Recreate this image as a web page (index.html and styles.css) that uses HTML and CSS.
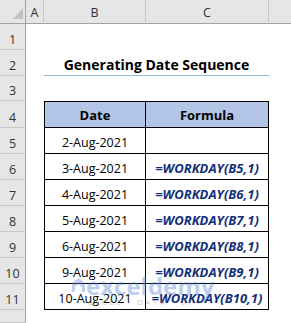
FILE: index.html
```html
<!DOCTYPE html>
<html>
<head>
<meta charset="utf-8">
<link rel="stylesheet" href="styles.css">
</head>
<body>
<div class="sheet">
  <div class="corner"><svg class="corner-tri" width="10" height="11" viewBox="0 0 10 11"><polygon points="10,0 10,11 0,11" fill="#c2c2c2"/></svg></div>
  <div class="colhead">A</div>
  <div class="colhead">B</div>
  <div class="colhead">C</div>
  <div class="colhead last"></div>

  <div class="rowhead">1</div><div class="cell"></div><div class="cell"></div><div class="cell"></div><div class="cell"></div>
  <div class="rowhead">2</div><div class="cell"></div><div class="cell title">Generating Date Sequence</div><div class="cell"></div>
  <div class="rowhead">3</div><div class="cell"></div><div class="cell"></div><div class="cell"></div><div class="cell"></div>

  <div class="rowhead">4</div><div class="cell"></div><div class="td th first">Date</div><div class="td th">Formula</div><div class="cell"></div>
  <div class="rowhead">5</div><div class="cell"></div><div class="td first">2-Aug-2021</div><div class="td formula"></div><div class="cell"></div>
  <div class="rowhead">6</div><div class="cell"></div><div class="td first">3-Aug-2021</div><div class="td formula">=WORKDAY(B5,1)</div><div class="cell"></div>
  <div class="rowhead">7</div><div class="cell"></div><div class="td first">4-Aug-2021</div><div class="td formula">=WORKDAY(B6,1)</div><div class="cell"></div>
  <div class="rowhead">8</div><div class="cell"></div><div class="td first">5-Aug-2021</div><div class="td formula">=WORKDAY(B7,1)</div><div class="cell"></div>
  <div class="rowhead">9</div><div class="cell"></div><div class="td first">6-Aug-2021</div><div class="td formula">=WORKDAY(B8,1)</div><div class="cell"></div>
  <div class="rowhead">10</div><div class="cell"></div><div class="td first">9-Aug-2021</div><div class="td formula">=WORKDAY(B9,1)</div><div class="cell"></div>
  <div class="rowhead">11</div><div class="cell"></div><div class="td first">10-Aug-2021</div><div class="td formula">=WORKDAY(B10,1)</div><div class="cell"></div>
  <div class="rowhead"></div>

  <div class="watermark">
    <svg class="wm-icon" width="13" height="14" viewBox="0 0 13 14"><polygon points="6.5,0 13,5 13,14 0,14 0,5" fill="#5b86d6"/><polygon points="6.5,6 10,9 10,14 3,14 3,9" fill="#ffffff"/></svg>
    <div class="wm-text">
      <span class="wm-name">exceldemy</span>
      <span class="wm-tag">EXCEL · DATA · BI</span>
    </div>
  </div>
</div>
</body>
</html>
```
FILE: styles.css
```css
* {
  box-sizing: border-box;
}

html, body {
  margin: 0;
  padding: 0;
  background: #ffffff;
}

body {
  font-family: "Open Sans", "Liberation Sans", sans-serif;
}

.sheet {
  position: relative;
  width: 291px;
  height: 323px;
  overflow: hidden;
  display: grid;
  grid-template-columns: 26px 18px 102px 123px 1fr;
  grid-template-rows: 24px 26px 26px 25px 27px repeat(7, 26px) 1fr;
}

.corner {
  background: #e6e6e6;
  border-right: 1px solid #a3a3a3;
  border-bottom: 1px solid #a3a3a3;
  display: flex;
  justify-content: flex-end;
  align-items: flex-end;
  padding: 0 2px 4px 0;
}

.colhead {
  background: #e6e6e6;
  border-bottom: 1px solid #a3a3a3;
  border-right: 1px solid #c8c8c8;
  display: flex;
  justify-content: center;
  align-items: flex-end;
  padding-bottom: 2px;
  font-size: 12.5px;
  line-height: 17px;
  color: #333333;
}

.colhead.last {
  border-right: none;
}

.rowhead {
  background: #e6e6e6;
  border-right: 1px solid #a3a3a3;
  border-bottom: 1px solid #c8c8c8;
  display: flex;
  justify-content: center;
  align-items: flex-end;
  padding-bottom: 1px;
  font-size: 12.5px;
  line-height: 17px;
  color: #333333;
}

.cell {
  background: #ffffff;
}

.title {
  grid-column: span 2;
  display: flex;
  justify-content: center;
  align-items: flex-end;
  padding-bottom: 1px;
  font-size: 14px;
  line-height: 19px;
  font-weight: 700;
  color: #000000;
  border-bottom: 1px solid #9db4e0;
  box-shadow: 0 2px 0 #9db4e0;
}

.td {
  display: flex;
  justify-content: center;
  align-items: flex-end;
  padding-bottom: 2px;
  font-size: 12.5px;
  line-height: 17px;
  color: #000000;
  border-right: 1px solid #000000;
  border-bottom: 1px solid #000000;
  white-space: nowrap;
}

.td.first {
  border-left: 1px solid #000000;
}

.th {
  background: #b4c6e7;
  border-top: 1px solid #000000;
  align-items: center;
  padding-bottom: 0;
  font-size: 13px;
  line-height: 18px;
  font-weight: 700;
}

.formula {
  font-size: 13px;
  font-weight: 700;
  font-style: italic;
  color: #14307a;
}

.watermark {
  position: absolute;
  left: 72px;
  top: 274px;
  display: flex;
  align-items: flex-start;
  gap: 1px;
  opacity: 0.38;
  pointer-events: none;
}

.wm-icon {
  margin-top: 4px;
}

.wm-text {
  display: flex;
  flex-direction: column;
}

.wm-name {
  font-size: 24px;
  line-height: 24px;
  font-weight: 700;
  color: #4f7fd6;
}

.wm-tag {
  font-size: 8px;
  line-height: 8px;
  letter-spacing: 2.5px;
  color: #7a7a7a;
  padding-left: 2px;
}
```
